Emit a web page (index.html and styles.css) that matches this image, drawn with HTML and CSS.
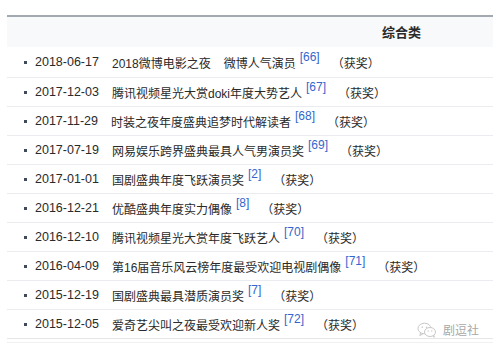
FILE: index.html
```html
<!DOCTYPE html>
<html lang="zh">
<head>
<meta charset="utf-8">
<link rel="stylesheet" href="styles.css">
</head>
<body>
<div class="wrap">
  <div class="table">
    <div class="head">综合类</div>
    <div class="row first"><span class="dot"></span><span class="date">2018-06-17</span><span class="ev">2018微博电影之夜</span><span class="ev">微博人气演员</span><sup class="ref">[66]</sup><span class="won">（获奖）</span></div>
    <div class="row"><span class="dot"></span><span class="date">2017-12-03</span><span class="ev">腾讯视频星光大赏doki年度大势艺人</span><sup class="ref">[67]</sup><span class="won">（获奖）</span></div>
    <div class="row"><span class="dot"></span><span class="date">2017-11-29</span><span class="ev">时装之夜年度盛典追梦时代解读者</span><sup class="ref">[68]</sup><span class="won">（获奖）</span></div>
    <div class="row"><span class="dot"></span><span class="date">2017-07-19</span><span class="ev">网易娱乐跨界盛典最具人气男演员奖</span><sup class="ref">[69]</sup><span class="won">（获奖）</span></div>
    <div class="row"><span class="dot"></span><span class="date">2017-01-01</span><span class="ev">国剧盛典年度飞跃演员奖</span><sup class="ref">[2]</sup><span class="won">（获奖）</span></div>
    <div class="row"><span class="dot"></span><span class="date">2016-12-21</span><span class="ev">优酷盛典年度实力偶像</span><sup class="ref">[8]</sup><span class="won">（获奖）</span></div>
    <div class="row"><span class="dot"></span><span class="date">2016-12-10</span><span class="ev">腾讯视频星光大赏年度飞跃艺人</span><sup class="ref">[70]</sup><span class="won">（获奖）</span></div>
    <div class="row"><span class="dot"></span><span class="date">2016-04-09</span><span class="ev">第16届音乐风云榜年度最受欢迎电视剧偶像</span><sup class="ref">[71]</sup><span class="won">（获奖）</span></div>
    <div class="row"><span class="dot"></span><span class="date">2015-12-19</span><span class="ev">国剧盛典最具潜质演员奖</span><sup class="ref">[7]</sup><span class="won">（获奖）</span></div>
    <div class="row last"><span class="dot"></span><span class="date">2015-12-05</span><span class="ev">爱奇艺尖叫之夜最受欢迎新人奖</span><sup class="ref">[72]</sup><span class="won">（获奖）</span></div>
  </div>
  <div class="after"></div>
</div>
<div class="mark">
  <svg width="20" height="16" viewBox="0 0 20 16" fill="none" stroke="#c8c8c8" stroke-width="1">
    <ellipse cx="7.5" cy="6.5" rx="6.5" ry="5.3"/>
    <path d="M3.5 11 L2.8 13.6 L6 11.8"/>
    <ellipse cx="13" cy="10" rx="5.5" ry="4.5" fill="#fff"/>
    <path d="M16 13.8 L17.2 15.4 L16.9 13.2"/>
    <circle cx="5.2" cy="5.2" r="0.8" fill="#c8c8c8" stroke="none"/>
    <circle cx="9.6" cy="5.2" r="0.8" fill="#c8c8c8" stroke="none"/>
    <circle cx="11.2" cy="9" r="0.7" fill="#c8c8c8" stroke="none"/>
    <circle cx="14.8" cy="9" r="0.7" fill="#c8c8c8" stroke="none"/>
  </svg>
  <span class="mark-text">剧逗社</span>
</div>
</body>
</html>
```

FILE: styles.css
```css
html, body {
  margin: 0;
  padding: 0;
  background: #fff;
}
body {
  font-family: "Liberation Sans", Arial, "Noto Sans CJK SC", sans-serif;
  font-size: 12px;
  color: #333;
  position: relative;
  width: 493px;
  height: 353px;
  overflow: hidden;
}
.wrap {
  padding: 15px 0 0 7px;
}
.table {
  width: 486px;
  border-top: 2px solid #a2a9b1;
}
.head {
  height: 30px;
  line-height: 30px;
  background: #f8f9fa;
  font-weight: bold;
  font-size: 13px;
  padding-left: 375px;
  color: #2a2a2a;
  font-family: "Noto Sans CJK SC", sans-serif;
}
.row {
  box-sizing: border-box;
  height: 29px;
  border-bottom: 1px solid #eaecf0;
  display: flex;
  align-items: center;
  padding-left: 17px;
  white-space: nowrap;
}
.row.first {
  height: 31px;
}
.row.last {
  border-bottom: 1px solid #e4e6ea;
}
.after {
  width: 486px;
  height: 1px;
  margin-top: 3px;
  background: #eef0f2;
}
.dot {
  width: 3px;
  height: 3px;
  background: #404a5a;
  margin-right: 8px;
  flex: none;
}
.date {
  font-size: 12.5px;
  color: #2a2a2a;
}
.ev {
  margin-left: 13px;
  font-family: "Liberation Sans", "Noto Sans CJK SC", sans-serif;
  color: #2a2a2a;
}
.ref {
  font-size: 12px;
  color: #3366cc;
  margin-left: 4px;
  position: relative;
  top: -5px;
  line-height: 1;
}
.won {
  margin-left: 12px;
  font-family: "Noto Sans CJK SC", sans-serif;
  color: #2a2a2a;
}
.mark {
  position: absolute;
  left: 417px;
  top: 321px;
  display: flex;
  align-items: center;
  gap: 6px;
}
.mark-text {
  font-family: "Noto Sans CJK SC", sans-serif;
  font-size: 12px;
  color: #a8a8a8;
}
```
